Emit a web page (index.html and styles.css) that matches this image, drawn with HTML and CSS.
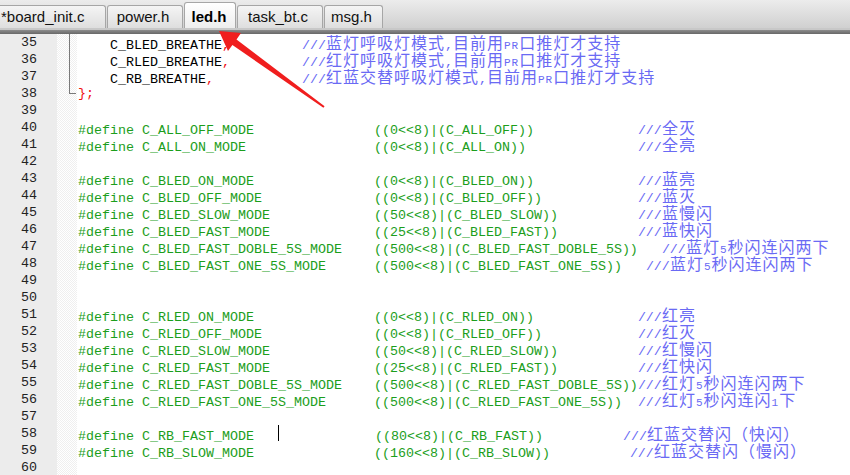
FILE: index.html
```html
<!DOCTYPE html>
<html lang="zh-CN">
<head>
    <meta charset="UTF-8">
    <title>led.h</title>
    <link rel="stylesheet" href="styles.css">
</head>
<body>
    <div class="tabbar">
        <div class="tab t1">*board_init.c</div>
        <div class="tab t2">power.h</div>
        <div class="tab t3 active">led.h</div>
        <div class="tab t4">task_bt.c</div>
        <div class="tab t5">msg.h</div>
    </div>
    <div class="tabline"></div>

    <div class="editor">
        <div class="gutter">
            <div class="r">35</div><div class="r">36</div><div class="r">37</div><div class="r">38</div>
            <div class="r">39</div><div class="r">40</div><div class="r">41</div><div class="r">42</div>
            <div class="r">43</div><div class="r">44</div><div class="r">45</div><div class="r">46</div>
            <div class="r">47</div><div class="r">48</div><div class="r">49</div><div class="r">50</div>
            <div class="r">51</div><div class="r">52</div><div class="r">53</div><div class="r">54</div>
            <div class="r">55</div><div class="r">56</div><div class="r">57</div><div class="r">58</div>
            <div class="r">59</div><div class="r">60</div>
        </div>
        <div class="fold">
            <div class="fold-line"></div>
        </div>
        <div class="code">
<div class="r">    C_BLED_BREATHE<span class="op">,</span>         <span class="cm">///<span class="zh">蓝灯呼吸灯模式</span>,<span class="zh">目前用</span><span class="sm">PR</span><span class="zh">口推灯才支持</span></span></div>
<div class="r">    C_RLED_BREATHE<span class="op">,</span>         <span class="cm">///<span class="zh">红灯呼吸灯模式</span>,<span class="zh">目前用</span><span class="sm">PR</span><span class="zh">口推灯才支持</span></span></div>
<div class="r">    C_RB_BREATHE<span class="op">,</span>           <span class="cm">///<span class="zh">红蓝交替呼吸灯模式</span>,<span class="zh">目前用</span><span class="sm">PR</span><span class="zh">口推灯才支持</span></span></div>
<div class="r"><span class="op">};</span></div>
<div class="r"></div>
<div class="r pp">#define C_ALL_OFF_MODE               ((0&lt;&lt;8)|(C_ALL_OFF))             <span class="cm">///<span class="zh">全灭</span></span></div>
<div class="r pp">#define C_ALL_ON_MODE                ((0&lt;&lt;8)|(C_ALL_ON))              <span class="cm">///<span class="zh">全亮</span></span></div>
<div class="r"></div>
<div class="r pp">#define C_BLED_ON_MODE               ((0&lt;&lt;8)|(C_BLED_ON))             <span class="cm">///<span class="zh">蓝亮</span></span></div>
<div class="r pp">#define C_BLED_OFF_MODE              ((0&lt;&lt;8)|(C_BLED_OFF))            <span class="cm">///<span class="zh">蓝灭</span></span></div>
<div class="r pp">#define C_BLED_SLOW_MODE             ((50&lt;&lt;8)|(C_BLED_SLOW))          <span class="cm">///<span class="zh">蓝慢闪</span></span></div>
<div class="r pp">#define C_BLED_FAST_MODE             ((25&lt;&lt;8)|(C_BLED_FAST))          <span class="cm">///<span class="zh">蓝快闪</span></span></div>
<div class="r pp">#define C_BLED_FAST_DOBLE_5S_MODE    ((500&lt;&lt;8)|(C_BLED_FAST_DOBLE_5S))   <span class="cm">///<span class="zh">蓝灯</span><span class="sm">5</span><span class="zh">秒闪连闪两下</span></span></div>
<div class="r pp">#define C_BLED_FAST_ONE_5S_MODE      ((500&lt;&lt;8)|(C_BLED_FAST_ONE_5S))   <span class="cm">///<span class="zh">蓝灯</span><span class="sm">5</span><span class="zh">秒闪连闪两下</span></span></div>
<div class="r"></div>
<div class="r"></div>
<div class="r pp">#define C_RLED_ON_MODE               ((0&lt;&lt;8)|(C_RLED_ON))             <span class="cm">///<span class="zh">红亮</span></span></div>
<div class="r pp">#define C_RLED_OFF_MODE              ((0&lt;&lt;8)|(C_RLED_OFF))            <span class="cm">///<span class="zh">红灭</span></span></div>
<div class="r pp">#define C_RLED_SLOW_MODE             ((50&lt;&lt;8)|(C_RLED_SLOW))          <span class="cm">///<span class="zh">红慢闪</span></span></div>
<div class="r pp">#define C_RLED_FAST_MODE             ((25&lt;&lt;8)|(C_RLED_FAST))          <span class="cm">///<span class="zh">红快闪</span></span></div>
<div class="r pp">#define C_RLED_FAST_DOBLE_5S_MODE    ((500&lt;&lt;8)|(C_RLED_FAST_DOBLE_5S))<span class="cm">///<span class="zh">红灯</span><span class="sm">5</span><span class="zh">秒闪连闪两下</span></span></div>
<div class="r pp">#define C_RLED_FAST_ONE_5S_MODE      ((500&lt;&lt;8)|(C_RLED_FAST_ONE_5S))  <span class="cm">///<span class="zh">红灯</span><span class="sm">5</span><span class="zh">秒闪连闪</span><span class="sm">1</span><span class="zh">下</span></span></div>
<div class="r"></div>
<div class="r pp">#define C_RB_FAST_MODE   <span class="caret"></span>            ((80&lt;&lt;8)|(C_RB_FAST))          <span class="cm">///<span class="zh">红蓝交替闪（快闪）</span></span></div>
<div class="r pp">#define C_RB_SLOW_MODE               ((160&lt;&lt;8)|(C_RB_SLOW))          <span class="cm">///<span class="zh">红蓝交替闪（慢闪）</span></span></div>
<div class="r"></div>
        </div>
    </div>

    <svg class="arrow" width="850" height="475" viewBox="0 0 850 475">
        <polygon points="219,31 241,33 236.5,39.5 324.6,106.2 323.4,107.8 232.4,45 228,51" fill="#f01e1e"/>
    </svg>
</body>
</html>
```

FILE: styles.css
```css
body {
    margin: 0;
    width: 850px;
    height: 475px;
    overflow: hidden;
    background-color: #fff;
    position: relative;
    font-family: "Liberation Mono", "Courier New", monospace;
}
.tabbar {
    height: 28px;
    display: flex;
    align-items: flex-end;
    gap: 1px;
    overflow: hidden;
    background: linear-gradient(#ececec, #d0d0d0);
    border-bottom: 2px solid #c8c8c8;
}
.tab {
    flex: none;
    height: 23px;
    box-sizing: border-box;
    border: 1px solid #a6a6a6;
    border-bottom: none;
    border-radius: 3px 3px 0 0;
    background: linear-gradient(#f5f5f5, #dedede);
    font: 15px "Liberation Sans", Arial, sans-serif;
    line-height: 22px;
    color: #111;
    text-align: center;
    padding-right: 4px;
}
.tab.active {
    height: 26px;
    padding-top: 3px;
    padding-right: 2px;
    font-weight: bold;
    color: #000;
    background: linear-gradient(#ffffff, #eeeeee);
}
.t1 {
    width: 115px;
    margin-left: -9px;
    padding-left: 9px;
    text-align: left;
}
.t2 { width: 76px; }
.t3 { width: 52px; }
.t4 { width: 86px; }
.t5 { width: 59px; }
.tabline {
    height: 4px;
    background: linear-gradient(#8c8c8c, #686868);
}
.editor {
    display: flex;
    height: 441px;
}
.r {
    height: 17px;
    line-height: 17px;
    font-size: 13.33px;
    white-space: pre;
}
.gutter {
    width: 57px;
    flex: none;
    box-sizing: border-box;
    padding-right: 20px;
    text-align: right;
    background-color: #ececec;
    color: #222;
}
.fold {
    width: 20px;
    flex: none;
    background: repeating-conic-gradient(#efefef 0 25%, #fff 0 50%) 0 0 / 2px 2px;
}
.fold-line {
    margin-left: 12px;
    width: 6px;
    height: 59px;
    border-left: 1px solid #7a7a7a;
    border-bottom: 1px solid #7a7a7a;
}
.code {
    flex: 1;
    padding-left: 1px;
    color: #000;
}
.pp {
    color: #1c9e1c;
}
.op {
    color: #f01010;
}
.cm {
    color: #6a6af4;
}
.zh {
    font-family: "Noto Sans CJK SC", sans-serif;
    font-size: 16px;
    letter-spacing: 1px;
}
.sm {
    font-size: 11px;
    letter-spacing: 1px;
}
.caret {
    display: inline-block;
    width: 0;
    height: 16px;
    vertical-align: top;
    border-left: 1px solid #000;
}
.arrow {
    position: absolute;
    left: 0;
    top: 0;
    pointer-events: none;
}
```
